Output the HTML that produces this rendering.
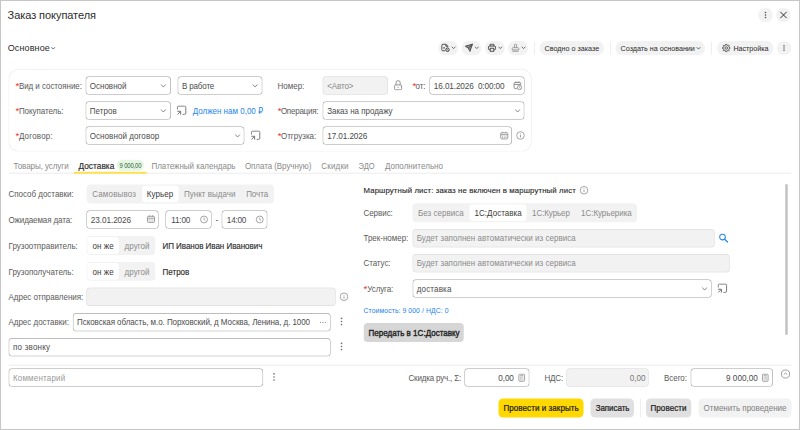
<!DOCTYPE html>
<html lang="ru"><head><meta charset="utf-8"><title>Заказ покупателя</title>
<style>
html,body{margin:0;padding:0;background:#fff;}
body{width:800px;height:430px;position:relative;overflow:hidden;font-family:"Liberation Sans", "DejaVu Sans", sans-serif;}
#root{position:absolute;left:0;top:0;width:3200px;height:1720px;transform:scale(0.25);transform-origin:0 0;}
.b{position:absolute;display:block;}
.t{position:absolute;white-space:pre;display:block;height:56px;line-height:56px;transform:scaleY(1.04);transform-origin:0 50%;}
</style></head>
<body>
<div id="root">
<span class="t" style="left:30.24px;top:33.2px;font-size:44px;color:#2b2b2b;letter-spacing:-0.24px;transform:scaleY(1.05);">Заказ покупателя</span>
<div class="b" style="left:3033px;top:31px;width:58px;height:58px;background:#f2f2f2;border-radius:29px;"></div>
<svg class="b" style="left:3054px;top:40px;" width="16" height="40" viewBox="0 0 4 10"><circle cx="2" cy="2.55" r="0.78" fill="#444"/><circle cx="2" cy="5.0" r="0.78" fill="#444"/><circle cx="2" cy="7.45" r="0.78" fill="#444"/></svg>
<div class="b" style="left:3105px;top:31px;width:58px;height:58px;background:#f2f2f2;border-radius:29px;"></div>
<svg class="b" style="left:3117.6px;top:43.6px;" width="32" height="32" viewBox="0 0 8 8"><path d="M1.1 1.1 L6.9 6.9 M6.9 1.1 L1.1 6.9" stroke="#333" stroke-width="1" stroke-linecap="round"/></svg>
<span class="t" style="left:30.56px;top:164.4px;font-size:36px;color:#2b2b2b;letter-spacing:0.56px;transform:scaleY(1.0);">Основное</span>
<svg class="b" style="left:203.2px;top:186px;" width="20" height="14.4" viewBox="0 0 5 3.6"><path d="M1 1 L2.5 2.6 L4 1" fill="none" stroke="#444" stroke-width="0.8" stroke-linecap="round" stroke-linejoin="round"/></svg>
<div class="b" style="left:1753px;top:164px;width:79px;height:57px;background:#f2f2f2;border-radius:28.4px;"></div>
<svg class="b" style="left:1804.2px;top:184px;" width="20.4" height="14.4" viewBox="0 0 5.1 3.6"><path d="M1 1 L2.55 2.6 L4.1 1" fill="none" stroke="#555" stroke-width="0.85" stroke-linecap="round" stroke-linejoin="round"/></svg>
<div class="b" style="left:1846px;top:164px;width:79px;height:57px;background:#f2f2f2;border-radius:28.4px;"></div>
<svg class="b" style="left:1897px;top:184px;" width="20.4" height="14.4" viewBox="0 0 5.1 3.6"><path d="M1 1 L2.55 2.6 L4.1 1" fill="none" stroke="#555" stroke-width="0.85" stroke-linecap="round" stroke-linejoin="round"/></svg>
<div class="b" style="left:1940px;top:164px;width:79px;height:57px;background:#f2f2f2;border-radius:28.4px;"></div>
<svg class="b" style="left:1991px;top:184px;" width="20.4" height="14.4" viewBox="0 0 5.1 3.6"><path d="M1 1 L2.55 2.6 L4.1 1" fill="none" stroke="#555" stroke-width="0.85" stroke-linecap="round" stroke-linejoin="round"/></svg>
<div class="b" style="left:2032px;top:164px;width:80px;height:57px;background:#f2f2f2;border-radius:28.4px;"></div>
<svg class="b" style="left:2084.2px;top:184px;" width="20.4" height="14.4" viewBox="0 0 5.1 3.6"><path d="M1 1 L2.55 2.6 L4.1 1" fill="none" stroke="#555" stroke-width="0.85" stroke-linecap="round" stroke-linejoin="round"/></svg>
<svg class="b" style="left:1763.2px;top:173.2px;" width="40" height="36" viewBox="0 0 10 9"><path d="M4.2 7.5 H2.2 Q1.1 7.5 1.1 6.4 V2.1 Q1.1 1 2.2 1 H5.2 L7.1 2.9 V4.1 M5.1 1.1 V3 H7" fill="none" stroke="#484848" stroke-width="0.95" stroke-linejoin="round"/><rect x="2.6" y="3.9" width="1.5" height="1.4" fill="#555"/><circle cx="6.7" cy="6.5" r="1.75" fill="none" stroke="#333" stroke-width="0.9"/><path d="M5.6 5.5 L7.8 7.6" stroke="#333" stroke-width="0.7"/></svg>
<svg class="b" style="left:1857.6px;top:173.2px;" width="36" height="36" viewBox="0 0 9 9"><path d="M0.9 3 L8 0.9 L5.4 8 L3.9 4.9 Z" fill="#9a9a9a" stroke="#3c3c3c" stroke-width="0.9" stroke-linejoin="round"/><path d="M3.9 4.9 L8 0.9" stroke="#3c3c3c" stroke-width="0.9"/><path d="M3.9 4.9 L5.4 8 L5.6 5.6 Z" fill="#f2f2f2" stroke="#3c3c3c" stroke-width="0.5"/></svg>
<svg class="b" style="left:1950px;top:173.2px;" width="36" height="36" viewBox="0 0 9 9"><path d="M2.6 2.8 V1 H6.4 V2.8" fill="none" stroke="#444" stroke-width="0.9"/><rect x="0.95" y="2.8" width="7.1" height="3.7" rx="1.1" fill="none" stroke="#444" stroke-width="1"/><rect x="2.7" y="5" width="3.6" height="3" fill="#f2f2f2" stroke="#444" stroke-width="0.9"/></svg>
<svg class="b" style="left:2044px;top:173.2px;" width="36" height="36" viewBox="0 0 9 9"><path d="M3.5 4.4 L3.4 1.9 Q3.4 0.9 4.5 0.9 Q5.6 0.9 5.6 1.9 L5.5 4.4" fill="none" stroke="#8a8a8a" stroke-width="0.8"/><path d="M1.2 6.7 V5.4 Q1.2 4.4 2.2 4.4 H6.8 Q7.8 4.4 7.8 5.4 V6.7 Z" fill="none" stroke="#8a8a8a" stroke-width="0.8" stroke-linejoin="round"/><path d="M1.4 8 H7.6" stroke="#8a8a8a" stroke-width="0.8"/></svg>
<div class="b" style="left:2137px;top:166px;width:2px;height:53px;background:#dcdcdc;"></div>
<div class="b" style="left:2158px;top:164px;width:258px;height:57px;background:#f2f2f2;border-radius:28.4px;"></div>
<span class="t" style="left:2178.05px;top:164.8px;font-size:28.8px;color:#2b2b2b;letter-spacing:-0.02px;">Сводно о заказе</span>
<div class="b" style="left:2441px;top:166px;width:2px;height:53px;background:#dcdcdc;"></div>
<div class="b" style="left:2462px;top:164px;width:358px;height:57px;background:#f2f2f2;border-radius:28.4px;"></div>
<span class="t" style="left:2482.45px;top:164.8px;font-size:28.8px;color:#2b2b2b;letter-spacing:-0.09px;">Создать на основании</span>
<svg class="b" style="left:2784.4px;top:185.6px;" width="20" height="14.4" viewBox="0 0 5 3.6"><path d="M1 1 L2.5 2.6 L4 1" fill="none" stroke="#444" stroke-width="0.8" stroke-linecap="round" stroke-linejoin="round"/></svg>
<div class="b" style="left:2845px;top:166px;width:2px;height:53px;background:#dcdcdc;"></div>
<div class="b" style="left:2868px;top:164px;width:226px;height:57px;background:#f2f2f2;border-radius:28.4px;"></div>
<span class="t" style="left:2933.65px;top:164.8px;font-size:28.8px;color:#2b2b2b;letter-spacing:-0.23px;">Настройка</span>
<svg class="b" style="left:2887.2px;top:174px;" width="36" height="36" viewBox="0 0 9 9"><path d="M7.32 3.82 L8.21 3.97 L8.21 5.03 L7.32 5.18 L6.97 6.02 L7.50 6.75 L6.75 7.50 L6.02 6.97 L5.18 7.32 L5.03 8.21 L3.97 8.21 L3.82 7.32 L2.98 6.97 L2.25 7.50 L1.50 6.75 L2.03 6.02 L1.68 5.18 L0.79 5.03 L0.79 3.97 L1.68 3.82 L2.03 2.98 L1.50 2.25 L2.25 1.50 L2.98 2.03 L3.82 1.68 L3.97 0.79 L5.03 0.79 L5.18 1.68 L6.02 2.03 L6.75 1.50 L7.50 2.25 L6.97 2.98 Z" fill="none" stroke="#444" stroke-width="0.85" stroke-linejoin="round"/><circle cx="4.5" cy="4.5" r="1.3" fill="none" stroke="#444" stroke-width="0.8"/></svg>
<div class="b" style="left:3108px;top:164px;width:57px;height:57px;background:#f2f2f2;border-radius:28.4px;"></div>
<svg class="b" style="left:3128.4px;top:171.6px;" width="16" height="40" viewBox="0 0 4 10"><circle cx="2" cy="2.7" r="0.75" fill="#505050"/><circle cx="2" cy="5.0" r="0.75" fill="#505050"/><circle cx="2" cy="7.3" r="0.75" fill="#505050"/></svg>
<div class="b" style="left:34px;top:276px;width:2093px;height:330px;background:#fff;border-radius:40px;box-shadow:inset 0 0 0 2.4px #e6e6e6;"></div>
<span class="t" style="left:61.6px;top:314px;font-size:38px;color:#e8302a;transform:scaleY(1.0);">*</span>
<span class="t" style="left:75.52px;top:315.2px;font-size:32px;color:#5a5a5a;letter-spacing:-0.21px;">Вид и состояние:</span>
<div class="b" style="left:342px;top:305px;width:342px;height:74px;background:#fff;border-radius:15.2px;box-shadow:inset 0 0 0 2.8px #a8a8a8;"></div>
<span class="t" style="left:358.72px;top:315.2px;font-size:32px;color:#4c4c4c;letter-spacing:0.09px;">Основной</span>
<svg class="b" style="left:640.8px;top:334.6px;" width="24.8" height="17.2" viewBox="0 0 6.2 4.3"><path d="M1 1 L3.1 3.3 L5.2 1" fill="none" stroke="#757575" stroke-width="0.85" stroke-linecap="round" stroke-linejoin="round"/></svg>
<div class="b" style="left:710px;top:305px;width:340px;height:74px;background:#fff;border-radius:15.2px;box-shadow:inset 0 0 0 2.8px #a8a8a8;"></div>
<span class="t" style="left:727.52px;top:315.2px;font-size:32px;color:#4c4c4c;letter-spacing:-0.51px;">В работе</span>
<svg class="b" style="left:1008px;top:334.6px;" width="24.8" height="17.2" viewBox="0 0 6.2 4.3"><path d="M1 1 L3.1 3.3 L5.2 1" fill="none" stroke="#757575" stroke-width="0.85" stroke-linecap="round" stroke-linejoin="round"/></svg>
<span class="t" style="left:1110.32px;top:315.2px;font-size:32px;color:#5a5a5a;letter-spacing:-0.09px;">Номер:</span>
<div class="b" style="left:1290px;top:305px;width:262px;height:74px;background:#f2f2f2;border-radius:15.2px;box-shadow:inset 0 0 0 2.8px #dedede;"></div>
<span class="t" style="left:1308.72px;top:315.2px;font-size:32px;color:#8a8a8a;letter-spacing:-0.35px;">&lt;Авто&gt;</span>
<svg class="b" style="left:1574.4px;top:317.6px;" width="40" height="44" viewBox="0 0 10 11"><rect x="1.1" y="5.4" width="7" height="4.9" rx="1.1" fill="none" stroke="#7a7a7a" stroke-width="0.8"/><path d="M2.5 5.4 V3.4 Q2.5 1.1 4.6 1.1 Q6.7 1.1 6.7 3.4 V5.4" fill="none" stroke="#7a7a7a" stroke-width="0.8"/><rect x="4.2" y="7.2" width="0.8" height="1.2" fill="#7a7a7a"/></svg>
<span class="t" style="left:1649.6px;top:314px;font-size:38px;color:#e8302a;transform:scaleY(1.0);">*</span>
<span class="t" style="left:1661.92px;top:315.2px;font-size:32px;color:#5a5a5a;letter-spacing:-0.24px;">от:</span>
<div class="b" style="left:1717px;top:305px;width:382px;height:74px;background:#fff;border-radius:15.2px;box-shadow:inset 0 0 0 2.8px #a8a8a8;"></div>
<span class="t" style="left:1735.49px;top:315.2px;font-size:32.8px;color:#4c4c4c;letter-spacing:-0.51px;">16.01.2026  0:00:00</span>
<svg class="b" style="left:2052px;top:322px;" width="40" height="40" viewBox="0 0 10 10"><path d="M3.9 8.2 H2.2 Q1.1 8.2 1.1 7.1 V3 Q1.1 1.9 2.2 1.9 H6.6 Q7.7 1.9 7.7 3 V4.2 M1.1 3.9 H7.7 M2.9 0.9 V2.3 M5.9 0.9 V2.3" stroke="#7c7c7c" stroke-width="0.85" fill="none"/><circle cx="6.5" cy="7" r="2.1" fill="none" stroke="#7c7c7c" stroke-width="0.8"/><path d="M6.5 6 V7.1 L7.2 7.6" fill="none" stroke="#7c7c7c" stroke-width="0.6"/></svg>
<span class="t" style="left:61.6px;top:414.4px;font-size:38px;color:#e8302a;transform:scaleY(1.0);">*</span>
<span class="t" style="left:75.52px;top:415.6px;font-size:32px;color:#5a5a5a;letter-spacing:-0.23px;">Покупатель:</span>
<div class="b" style="left:342px;top:405px;width:342px;height:74px;background:#fff;border-radius:15.2px;box-shadow:inset 0 0 0 2.8px #a8a8a8;"></div>
<span class="t" style="left:358.72px;top:415.6px;font-size:32px;color:#4c4c4c;letter-spacing:0.16px;">Петров</span>
<svg class="b" style="left:640.8px;top:435px;" width="24.8" height="17.2" viewBox="0 0 6.2 4.3"><path d="M1 1 L3.1 3.3 L5.2 1" fill="none" stroke="#757575" stroke-width="0.85" stroke-linecap="round" stroke-linejoin="round"/></svg>
<svg class="b" style="left:706px;top:421.2px;" width="44" height="40" viewBox="0 0 11 10"><path d="M0.95 4.2 V2.1 A1.25 1.25 0 0 1 2.2 0.85 H8.05 A1.25 1.25 0 0 1 9.3 2.1 V7.9 A1.25 1.25 0 0 1 8.05 9.15 H6.2" fill="none" stroke="#747474" stroke-width="0.95"/><path d="M0.9 9.3 L4.1 6.1 M0.8 6 H4.15 V9.35" fill="none" stroke="#747474" stroke-width="1"/></svg>
<span class="t" style="left:770.72px;top:415.6px;font-size:32px;color:#2385ee;letter-spacing:0.02px;">Должен нам 0,00 ₽</span>
<span class="t" style="left:1110.8px;top:414.4px;font-size:38px;color:#e8302a;transform:scaleY(1.0);">*</span>
<span class="t" style="left:1123.52px;top:415.6px;font-size:32px;color:#5a5a5a;letter-spacing:-0.93px;">Операция:</span>
<div class="b" style="left:1290px;top:405px;width:808px;height:74px;background:#fff;border-radius:15.2px;box-shadow:inset 0 0 0 2.8px #a8a8a8;"></div>
<span class="t" style="left:1308.72px;top:415.6px;font-size:32px;color:#4c4c4c;letter-spacing:-0.13px;">Заказ на продажу</span>
<svg class="b" style="left:2058px;top:435px;" width="24.8" height="17.2" viewBox="0 0 6.2 4.3"><path d="M1 1 L3.1 3.3 L5.2 1" fill="none" stroke="#757575" stroke-width="0.85" stroke-linecap="round" stroke-linejoin="round"/></svg>
<span class="t" style="left:61.6px;top:514.4px;font-size:38px;color:#e8302a;transform:scaleY(1.0);">*</span>
<span class="t" style="left:75.52px;top:515.6px;font-size:32px;color:#5a5a5a;letter-spacing:0.81px;">Договор:</span>
<div class="b" style="left:342px;top:505px;width:636px;height:74px;background:#fff;border-radius:15.2px;box-shadow:inset 0 0 0 2.8px #a8a8a8;"></div>
<span class="t" style="left:358.72px;top:515.6px;font-size:32px;color:#4c4c4c;letter-spacing:0.31px;">Основной договор</span>
<svg class="b" style="left:938.4px;top:535px;" width="24.8" height="17.2" viewBox="0 0 6.2 4.3"><path d="M1 1 L3.1 3.3 L5.2 1" fill="none" stroke="#757575" stroke-width="0.85" stroke-linecap="round" stroke-linejoin="round"/></svg>
<svg class="b" style="left:1001.6px;top:521.2px;" width="44" height="40" viewBox="0 0 11 10"><path d="M0.95 4.2 V2.1 A1.25 1.25 0 0 1 2.2 0.85 H8.05 A1.25 1.25 0 0 1 9.3 2.1 V7.9 A1.25 1.25 0 0 1 8.05 9.15 H6.2" fill="none" stroke="#747474" stroke-width="0.95"/><path d="M0.9 9.3 L4.1 6.1 M0.8 6 H4.15 V9.35" fill="none" stroke="#747474" stroke-width="1"/></svg>
<span class="t" style="left:1110.8px;top:514.4px;font-size:38px;color:#e8302a;transform:scaleY(1.0);">*</span>
<span class="t" style="left:1123.52px;top:515.6px;font-size:32px;color:#5a5a5a;letter-spacing:0.13px;">Отгрузка:</span>
<div class="b" style="left:1290px;top:505px;width:758px;height:74px;background:#fff;border-radius:15.2px;box-shadow:inset 0 0 0 2.8px #a8a8a8;"></div>
<span class="t" style="left:1308.69px;top:515.6px;font-size:32.8px;color:#4c4c4c;letter-spacing:-0.39px;">17.01.2026</span>
<svg class="b" style="left:1996.8px;top:524.4px;" width="40" height="36" viewBox="0 0 10 9"><rect x="1.45" y="1.8" width="7.1" height="6.1" rx="1.1" fill="none" stroke="#868686" stroke-width="0.8"/><path d="M1.45 3.7 H8.55 M3.3 0.8 V2.1 M6.7 0.8 V2.1" stroke="#868686" stroke-width="0.8" fill="none"/><path d="M2.7 5.2 H7.3 M2.7 6.5 H7.3" stroke="#868686" stroke-width="0.7" stroke-dasharray="0.9 0.95"/></svg>
<svg class="b" style="left:2061.6px;top:522.4px;" width="40" height="40" viewBox="0 0 10 10"><circle cx="5" cy="5" r="3.8" fill="none" stroke="#858585" stroke-width="0.72"/><rect x="4.6" y="4.5" width="0.8" height="2.5" fill="#8c8c8c"/><rect x="4.6" y="3" width="0.8" height="0.85" fill="#8c8c8c"/></svg>
<div class="b" style="left:36px;top:691px;width:3130px;height:3px;background:#e6e6e6;"></div>
<span class="t" style="left:53.92px;top:636.4px;font-size:32px;color:#8a8a8a;letter-spacing:-0.24px;">Товары, услуги</span>
<span class="t" style="left:313.87px;top:635.6px;font-size:33.2px;color:#262626;-webkit-text-stroke:0.56px #262626;letter-spacing:0.13px;transform:scaleY(1.12);">Доставка</span>
<div class="b" style="left:467px;top:639px;width:109px;height:44px;background:#e4f7e3;border-radius:21.6px;"></div>
<span class="t" style="left:478.26px;top:636px;font-size:23.6px;color:#35573a;letter-spacing:-0.57px;transform:scaleY(1.17);">9 000,00</span>
<div class="b" style="left:295px;top:687px;width:293px;height:8px;background:#ffe050;border-radius:4px;"></div>
<span class="t" style="left:605.92px;top:636.4px;font-size:32px;color:#8a8a8a;letter-spacing:-0.04px;">Платежный календарь</span>
<span class="t" style="left:979.52px;top:636.4px;font-size:32px;color:#8a8a8a;letter-spacing:-0.24px;">Оплата (Вручную)</span>
<span class="t" style="left:1285.12px;top:636.4px;font-size:32px;color:#8a8a8a;letter-spacing:0.69px;">Скидки</span>
<span class="t" style="left:1434px;top:636.4px;font-size:30px;color:#8a8a8a;letter-spacing:0.29px;transform:scaleY(1.1);">ЭДО</span>
<span class="t" style="left:1539.52px;top:636.4px;font-size:32px;color:#8a8a8a;letter-spacing:0.19px;">Дополнительно</span>
<span class="t" style="left:33.92px;top:749.6px;font-size:32px;color:#5a5a5a;letter-spacing:-0.07px;">Способ доставки:</span>
<div class="b" style="left:347px;top:738px;width:749px;height:76px;background:#f2f2f2;border-radius:16px;"></div>
<span class="t" style="left:368.72px;top:749.6px;font-size:32px;color:#8a8a8a;letter-spacing:0.69px;">Самовывоз</span>
<div class="b" style="left:568px;top:743px;width:146px;height:66px;background:#fff;border-radius:12px;"></div>
<span class="t" style="left:586.72px;top:749.6px;font-size:32px;color:#3a3a3a;letter-spacing:0.36px;">Курьер</span>
<span class="t" style="left:735.52px;top:749.6px;font-size:32px;color:#8a8a8a;letter-spacing:0.15px;">Пункт выдачи</span>
<span class="t" style="left:984.72px;top:749.6px;font-size:32px;color:#8a8a8a;letter-spacing:-0.27px;">Почта</span>
<span class="t" style="left:33.92px;top:851.2px;font-size:32px;color:#5a5a5a;letter-spacing:-0.42px;">Ожидаемая дата:</span>
<div class="b" style="left:345px;top:841px;width:290px;height:74px;background:#fff;border-radius:15.2px;box-shadow:inset 0 0 0 2.8px #a8a8a8;"></div>
<span class="t" style="left:363.49px;top:851.2px;font-size:32.8px;color:#4c4c4c;letter-spacing:-0.35px;">23.01.2026</span>
<svg class="b" style="left:584.4px;top:858.4px;" width="40" height="36" viewBox="0 0 10 9"><rect x="1.45" y="1.8" width="7.1" height="6.1" rx="1.1" fill="none" stroke="#868686" stroke-width="0.8"/><path d="M1.45 3.7 H8.55 M3.3 0.8 V2.1 M6.7 0.8 V2.1" stroke="#868686" stroke-width="0.8" fill="none"/><path d="M2.7 5.2 H7.3 M2.7 6.5 H7.3" stroke="#868686" stroke-width="0.7" stroke-dasharray="0.9 0.95"/></svg>
<div class="b" style="left:661px;top:841px;width:186px;height:74px;background:#fff;border-radius:15.2px;box-shadow:inset 0 0 0 2.8px #a8a8a8;"></div>
<span class="t" style="left:684.69px;top:851.2px;font-size:32.8px;color:#4c4c4c;letter-spacing:-0.75px;">11:00</span>
<svg class="b" style="left:796px;top:858.4px;" width="40" height="40" viewBox="0 0 10 10"><circle cx="5" cy="5" r="3.45" fill="none" stroke="#868686" stroke-width="0.75"/><path d="M5 3 V5.1 L6.3 5.9" fill="none" stroke="#868686" stroke-width="0.7"/></svg>
<span class="t" style="left:862.4px;top:851.2px;font-size:32px;color:#4c4c4c;">-</span>
<div class="b" style="left:886px;top:841px;width:184px;height:74px;background:#fff;border-radius:15.2px;box-shadow:inset 0 0 0 2.8px #a8a8a8;"></div>
<span class="t" style="left:907.49px;top:851.2px;font-size:32.8px;color:#4c4c4c;letter-spacing:-1.06px;">14:00</span>
<svg class="b" style="left:1019.2px;top:858.4px;" width="40" height="40" viewBox="0 0 10 10"><circle cx="5" cy="5" r="3.45" fill="none" stroke="#868686" stroke-width="0.75"/><path d="M5 3 V5.1 L6.3 5.9" fill="none" stroke="#868686" stroke-width="0.7"/></svg>
<span class="t" style="left:33.92px;top:955.2px;font-size:32px;color:#5a5a5a;letter-spacing:0.09px;">Грузоотправитель:</span>
<div class="b" style="left:347px;top:944px;width:274px;height:76px;background:#f2f2f2;border-radius:16px;"></div>
<div class="b" style="left:350px;top:948px;width:125px;height:68px;background:#fff;border-radius:12px;"></div>
<span class="t" style="left:369.92px;top:955.2px;font-size:32px;color:#3c3c3c;letter-spacing:0.35px;">он же</span>
<span class="t" style="left:498.32px;top:955.2px;font-size:32px;color:#8a8a8a;letter-spacing:0.20px;">другой</span>
<span class="t" style="left:649.92px;top:955.2px;font-size:32px;color:#2b2b2b;-webkit-text-stroke:0.56px #2b2b2b;letter-spacing:-0.13px;">ИП Иванов Иван Иванович</span>
<span class="t" style="left:33.92px;top:1058.8px;font-size:32px;color:#5a5a5a;letter-spacing:0.12px;">Грузополучатель:</span>
<div class="b" style="left:347px;top:1048px;width:274px;height:75px;background:#f2f2f2;border-radius:16px;"></div>
<div class="b" style="left:350px;top:1052px;width:125px;height:67px;background:#fff;border-radius:12px;"></div>
<span class="t" style="left:369.92px;top:1058.8px;font-size:32px;color:#3c3c3c;letter-spacing:0.35px;">он же</span>
<span class="t" style="left:498.32px;top:1058.8px;font-size:32px;color:#8a8a8a;letter-spacing:0.20px;">другой</span>
<span class="t" style="left:649.92px;top:1058.8px;font-size:32px;color:#2b2b2b;-webkit-text-stroke:0.56px #2b2b2b;letter-spacing:0.08px;">Петров</span>
<span class="t" style="left:33.92px;top:1160.2px;font-size:32px;color:#5a5a5a;letter-spacing:-0.02px;">Адрес отправления:</span>
<div class="b" style="left:345px;top:1150px;width:998px;height:74px;background:#f2f2f2;border-radius:15.2px;box-shadow:inset 0 0 0 2.8px #dedede;"></div>
<svg class="b" style="left:1356.4px;top:1166.8px;" width="40" height="40" viewBox="0 0 10 10"><circle cx="5" cy="5" r="3.8" fill="none" stroke="#858585" stroke-width="0.72"/><rect x="4.6" y="4.5" width="0.8" height="2.5" fill="#8c8c8c"/><rect x="4.6" y="3" width="0.8" height="0.85" fill="#8c8c8c"/></svg>
<span class="t" style="left:33.92px;top:1262px;font-size:32px;color:#5a5a5a;letter-spacing:-0.08px;">Адрес доставки:</span>
<div class="b" style="left:291px;top:1252px;width:1032px;height:74px;background:#fff;border-radius:15.2px;box-shadow:inset 0 0 0 2.8px #a8a8a8;"></div>
<span class="t" style="left:308.32px;top:1262px;font-size:32px;color:#4c4c4c;letter-spacing:-0.25px;">Псковская область, м.о. Порховский, д Москва, Ленина, д. 1000</span>
<svg class="b" style="left:1278.4px;top:1284.8px;" width="28" height="8" viewBox="0 0 7 2"><circle cx="1.1" cy="1" r="0.55" fill="#666"/><circle cx="3.5" cy="1" r="0.55" fill="#666"/><circle cx="5.9" cy="1" r="0.55" fill="#666"/></svg>
<svg class="b" style="left:1357.6px;top:1266px;" width="16" height="40" viewBox="0 0 4 10"><circle cx="2" cy="1.9" r="0.8" fill="#6c6c6c"/><circle cx="2" cy="5.0" r="0.8" fill="#6c6c6c"/><circle cx="2" cy="8.1" r="0.8" fill="#6c6c6c"/></svg>
<div class="b" style="left:34px;top:1352px;width:1289px;height:74px;background:#fff;border-radius:15.2px;box-shadow:inset 0 0 0 2.8px #a8a8a8;"></div>
<span class="t" style="left:51.92px;top:1362.2px;font-size:32px;color:#4c4c4c;letter-spacing:0.88px;">по звонку</span>
<svg class="b" style="left:1357.6px;top:1366.2px;" width="16" height="40" viewBox="0 0 4 10"><circle cx="2" cy="1.9" r="0.8" fill="#6c6c6c"/><circle cx="2" cy="5.0" r="0.8" fill="#6c6c6c"/><circle cx="2" cy="8.1" r="0.8" fill="#6c6c6c"/></svg>
<div class="b" style="left:34px;top:1459px;width:3132px;height:3px;background:#e6e6e6;"></div>
<div class="b" style="left:34px;top:1473px;width:1019px;height:74px;background:#fff;border-radius:15.2px;box-shadow:inset 0 0 0 2.8px #a8a8a8;"></div>
<span class="t" style="left:51.92px;top:1483.6px;font-size:32px;color:#9a9a9a;letter-spacing:0.70px;">Комментарий</span>
<svg class="b" style="left:1087.6px;top:1487.6px;" width="16" height="40" viewBox="0 0 4 10"><circle cx="2" cy="1.9" r="0.8" fill="#6c6c6c"/><circle cx="2" cy="5.0" r="0.8" fill="#6c6c6c"/><circle cx="2" cy="8.1" r="0.8" fill="#6c6c6c"/></svg>
<span class="t" style="left:1633.92px;top:1483.6px;font-size:32px;color:#5a5a5a;letter-spacing:-0.71px;">Скидка руч., Σ:</span>
<div class="b" style="left:1857px;top:1473px;width:261px;height:74px;background:#fff;border-radius:15.2px;box-shadow:inset 0 0 0 2.8px #a8a8a8;"></div>
<span class="t" style="left:1993.49px;top:1483.6px;font-size:32.8px;color:#4c4c4c;letter-spacing:-0.54px;">0,00</span>
<svg class="b" style="left:2071.8px;top:1493.2px;" width="30" height="36" viewBox="0 0 7.5 9"><rect x="0.9" y="0.95" width="5.7" height="7.1" rx="0.9" fill="none" stroke="#848484" stroke-width="0.75"/><path d="M2.1 2.6 H5.4" stroke="#848484" stroke-width="0.85"/><path d="M2.1 4.3 H5.4 M2.1 5.5 H5.4 M2.1 6.7 H5.4" stroke="#848484" stroke-width="0.6" stroke-dasharray="0.8 0.45"/></svg>
<span class="t" style="left:2177.52px;top:1483.6px;font-size:32px;color:#5a5a5a;letter-spacing:-0.61px;">НДС:</span>
<div class="b" style="left:2265px;top:1473px;width:330px;height:74px;background:#f2f2f2;border-radius:15.2px;box-shadow:inset 0 0 0 2.8px #dedede;"></div>
<span class="t" style="left:2519.49px;top:1483.6px;font-size:32.8px;color:#7a7a7a;letter-spacing:-0.41px;">0,00</span>
<span class="t" style="left:2655.92px;top:1483.6px;font-size:32px;color:#5a5a5a;letter-spacing:-0.13px;">Всего:</span>
<div class="b" style="left:2762px;top:1473px;width:330px;height:74px;background:#fff;border-radius:15.2px;box-shadow:inset 0 0 0 2.8px #a8a8a8;"></div>
<span class="t" style="left:2904.29px;top:1483.6px;font-size:32.8px;color:#4c4c4c;letter-spacing:-0.09px;">9 000,00</span>
<svg class="b" style="left:3046.2px;top:1493.2px;" width="30" height="36" viewBox="0 0 7.5 9"><rect x="0.9" y="0.95" width="5.7" height="7.1" rx="0.9" fill="none" stroke="#848484" stroke-width="0.75"/><path d="M2.1 2.6 H5.4" stroke="#848484" stroke-width="0.85"/><path d="M2.1 4.3 H5.4 M2.1 5.5 H5.4 M2.1 6.7 H5.4" stroke="#848484" stroke-width="0.6" stroke-dasharray="0.8 0.45"/></svg>
<svg class="b" style="left:3121.6px;top:1476px;" width="40" height="40" viewBox="0 0 10 10"><circle cx="5" cy="5" r="4.05" fill="none" stroke="#858585" stroke-width="0.78"/><path d="M3.3 5.6 L5 3.95 L6.7 5.6" fill="none" stroke="#7a7a7a" stroke-width="0.75"/></svg>
<div class="b" style="left:1994px;top:1594px;width:340px;height:76px;background:#ffd800;border-radius:18.4px;"></div>
<span class="t" style="left:2013.92px;top:1605.6px;font-size:32px;color:#222;-webkit-text-stroke:0.9px #222;letter-spacing:0.30px;">Провести и закрыть</span>
<div class="b" style="left:2362px;top:1594px;width:174px;height:76px;background:#e0e0e0;border-radius:18.4px;"></div>
<span class="t" style="left:2382.72px;top:1605.6px;font-size:32px;color:#222;-webkit-text-stroke:0.9px #222;letter-spacing:-0.26px;">Записать</span>
<div class="b" style="left:2561px;top:1594px;width:2px;height:76px;background:#dcdcdc;"></div>
<div class="b" style="left:2584px;top:1594px;width:181px;height:76px;background:#e0e0e0;border-radius:18.4px;"></div>
<span class="t" style="left:2601.92px;top:1605.6px;font-size:32px;color:#222;-webkit-text-stroke:0.9px #222;letter-spacing:0.37px;">Провести</span>
<div class="b" style="left:2794px;top:1594px;width:372px;height:76px;background:#f2f2f2;border-radius:18.4px;"></div>
<span class="t" style="left:2813.92px;top:1605.6px;font-size:32px;color:#808080;letter-spacing:0.03px;">Отменить проведение</span>
<span class="t" style="left:1453.95px;top:734px;font-size:31.2px;color:#2b2b2b;-webkit-text-stroke:0.56px #2b2b2b;letter-spacing:0.46px;">Маршрутный лист: заказ не включен в маршрутный лист</span>
<svg class="b" style="left:2316px;top:740.8px;" width="40" height="40" viewBox="0 0 10 10"><circle cx="5" cy="5" r="3.8" fill="none" stroke="#858585" stroke-width="0.72"/><rect x="4.6" y="4.5" width="0.8" height="2.5" fill="#8c8c8c"/><rect x="4.6" y="3" width="0.8" height="0.85" fill="#8c8c8c"/></svg>
<span class="t" style="left:1453.92px;top:824.4px;font-size:32px;color:#5a5a5a;letter-spacing:-0.18px;">Сервис:</span>
<div class="b" style="left:1650px;top:813px;width:898px;height:76px;background:#f2f2f2;border-radius:16px;"></div>
<span class="t" style="left:1671.92px;top:824.4px;font-size:32px;color:#8a8a8a;letter-spacing:0.06px;">Без сервиса</span>
<div class="b" style="left:1878px;top:818px;width:228px;height:66px;background:#fff;border-radius:12px;"></div>
<span class="t" style="left:1898.32px;top:824.4px;font-size:32px;color:#3a3a3a;letter-spacing:0.13px;">1С:Доставка</span>
<span class="t" style="left:2128.32px;top:824.4px;font-size:32px;color:#8a8a8a;letter-spacing:-0.35px;">1С:Курьер</span>
<span class="t" style="left:2324.32px;top:824.4px;font-size:32px;color:#8a8a8a;letter-spacing:-0.18px;">1С:Курьерика</span>
<span class="t" style="left:1453.92px;top:926.4px;font-size:32px;color:#5a5a5a;letter-spacing:-0.06px;">Трек-номер:</span>
<div class="b" style="left:1650px;top:916px;width:1209px;height:74px;background:#f2f2f2;border-radius:15.2px;box-shadow:inset 0 0 0 2.8px #dedede;"></div>
<span class="t" style="left:1667.12px;top:926.4px;font-size:32px;color:#8a8a8a;letter-spacing:0.08px;">Будет заполнен автоматически из сервиса</span>
<svg class="b" style="left:2869.6px;top:928.4px;" width="48" height="48" viewBox="0 0 12 12"><circle cx="5" cy="5" r="2.85" fill="none" stroke="#2a89f0" stroke-width="1.05"/><path d="M7.2 7.2 L10 10" stroke="#2a89f0" stroke-width="1.25" stroke-linecap="round"/></svg>
<span class="t" style="left:1453.92px;top:1026.2px;font-size:32px;color:#5a5a5a;letter-spacing:-0.31px;">Статус:</span>
<div class="b" style="left:1650px;top:1016px;width:1269px;height:74px;background:#f2f2f2;border-radius:15.2px;box-shadow:inset 0 0 0 2.8px #dedede;"></div>
<span class="t" style="left:1667.12px;top:1026.2px;font-size:32px;color:#8a8a8a;letter-spacing:0.08px;">Будет заполнен автоматически из сервиса</span>
<span class="t" style="left:1454.4px;top:1127.6px;font-size:38px;color:#e8302a;transform:scaleY(1.0);">*</span>
<span class="t" style="left:1469.12px;top:1128.8px;font-size:32px;color:#5a5a5a;letter-spacing:-0.39px;">Услуга:</span>
<div class="b" style="left:1650px;top:1117px;width:1197px;height:74px;background:#fff;border-radius:15.2px;box-shadow:inset 0 0 0 2.8px #a8a8a8;"></div>
<span class="t" style="left:1667.12px;top:1128.8px;font-size:32px;color:#4c4c4c;letter-spacing:0.59px;">доставка</span>
<svg class="b" style="left:2806px;top:1147px;" width="24.8" height="17.2" viewBox="0 0 6.2 4.3"><path d="M1 1 L3.1 3.3 L5.2 1" fill="none" stroke="#757575" stroke-width="0.85" stroke-linecap="round" stroke-linejoin="round"/></svg>
<svg class="b" style="left:2868.8px;top:1132.8px;" width="44" height="40" viewBox="0 0 11 10"><path d="M0.95 4.2 V2.1 A1.25 1.25 0 0 1 2.2 0.85 H8.05 A1.25 1.25 0 0 1 9.3 2.1 V7.9 A1.25 1.25 0 0 1 8.05 9.15 H6.2" fill="none" stroke="#747474" stroke-width="0.95"/><path d="M0.9 9.3 L4.1 6.1 M0.8 6 H4.15 V9.35" fill="none" stroke="#747474" stroke-width="1"/></svg>
<span class="t" style="left:1454.1px;top:1214px;font-size:27.6px;color:#2385ee;letter-spacing:0.21px;">Стоимость: 9 000 / НДС: 0</span>
<div class="b" style="left:1455px;top:1292px;width:400px;height:76px;background:#d6d6d6;border-radius:16px;"></div>
<span class="t" style="left:1473.92px;top:1304px;font-size:32px;color:#222;-webkit-text-stroke:1.4px #222;letter-spacing:0.09px;">Передать в 1С:Доставку</span>
<div class="b" style="left:3141px;top:736px;width:10px;height:604px;background:#c2c2c2;border-radius:5px;"></div>
</div>
<div style="position:absolute;left:0;top:0;width:800px;height:430px;box-sizing:border-box;border:1px solid #c6c6c6;pointer-events:none;"></div>
</body></html>
